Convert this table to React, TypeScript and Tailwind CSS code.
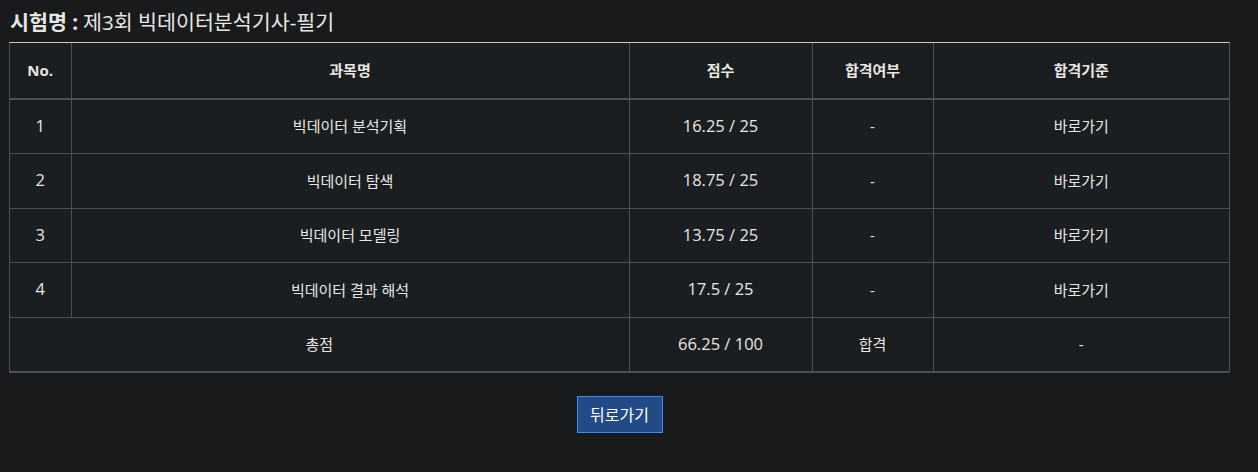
const rows = [
  { no: 1, subject: '빅데이터 분석기획', score: '16.25 / 25' },
  { no: 2, subject: '빅데이터 탐색', score: '18.75 / 25' },
  { no: 3, subject: '빅데이터 모델링', score: '13.75 / 25' },
  { no: 4, subject: '빅데이터 결과 해석', score: '17.5 / 25' },
];

const cell = 'border border-[#4b5056] text-center align-middle';
const num = 'text-[16.5px]';

export default function App() {
  return (
    <div
      className="min-h-[472px] w-full bg-[#181a1b] text-[#e8e6e3]"
      style={{ fontFamily: '"Open Sans", "Noto Sans CJK KR", sans-serif' }}
    >
      <div className="ml-[9px] w-[1221px]">
        {/* Exam title */}
        <h2 className="flex h-[42px] items-center pl-[1px] pt-[2px] text-[20.6px] leading-none">
          <span className="font-bold">시험명 :</span>
          <span className="ml-[5px]">제3회 빅데이터분석기사-필기</span>
        </h2>

        {/* Score table */}
        <div className="border-t border-t-[#d8c6aa] border-x border-b border-x-[#4b5056] border-b-[#4b5056] bg-[#1b1e21]">
          <table className="w-full border-collapse text-[15px]">
            <thead>
              <tr className="h-[56px]">
                <th className={`${cell} border-t-0 border-l-0 border-b-2 w-[61px] font-bold`}>No.</th>
                <th className={`${cell} border-t-0 border-b-2 w-[558px] font-bold`}>과목명</th>
                <th className={`${cell} border-t-0 border-b-2 w-[183px] font-bold`}>점수</th>
                <th className={`${cell} border-t-0 border-b-2 w-[121px] font-bold`}>합격여부</th>
                <th className={`${cell} border-t-0 border-r-0 border-b-2 font-bold`}>합격기준</th>
              </tr>
            </thead>
            <tbody>
              {rows.map(r => (
                <tr key={r.no} className="h-[54.5px]">
                  <td className={`${cell} ${num} border-l-0`}>{r.no}</td>
                  <td className={cell}>{r.subject}</td>
                  <td className={`${cell} ${num}`}>{r.score}</td>
                  <td className={cell}>-</td>
                  <td className={`${cell} border-r-0`}>바로가기</td>
                </tr>
              ))}
              <tr className="h-[54.5px]">
                <td colSpan={2} className={`${cell} border-l-0`}>총점</td>
                <td className={`${cell} ${num}`}>66.25 / 100</td>
                <td className={cell}>합격</td>
                <td className={`${cell} border-r-0`}>-</td>
              </tr>
            </tbody>
          </table>
        </div>

        {/* Back button */}
        <div className="flex justify-center pt-[23px]">
          <button className="h-[37px] w-[86px] border border-[#3a8cf2] bg-[#224a86] text-[16px] text-white">
            뒤로가기
          </button>
        </div>
      </div>
    </div>
  );
}
